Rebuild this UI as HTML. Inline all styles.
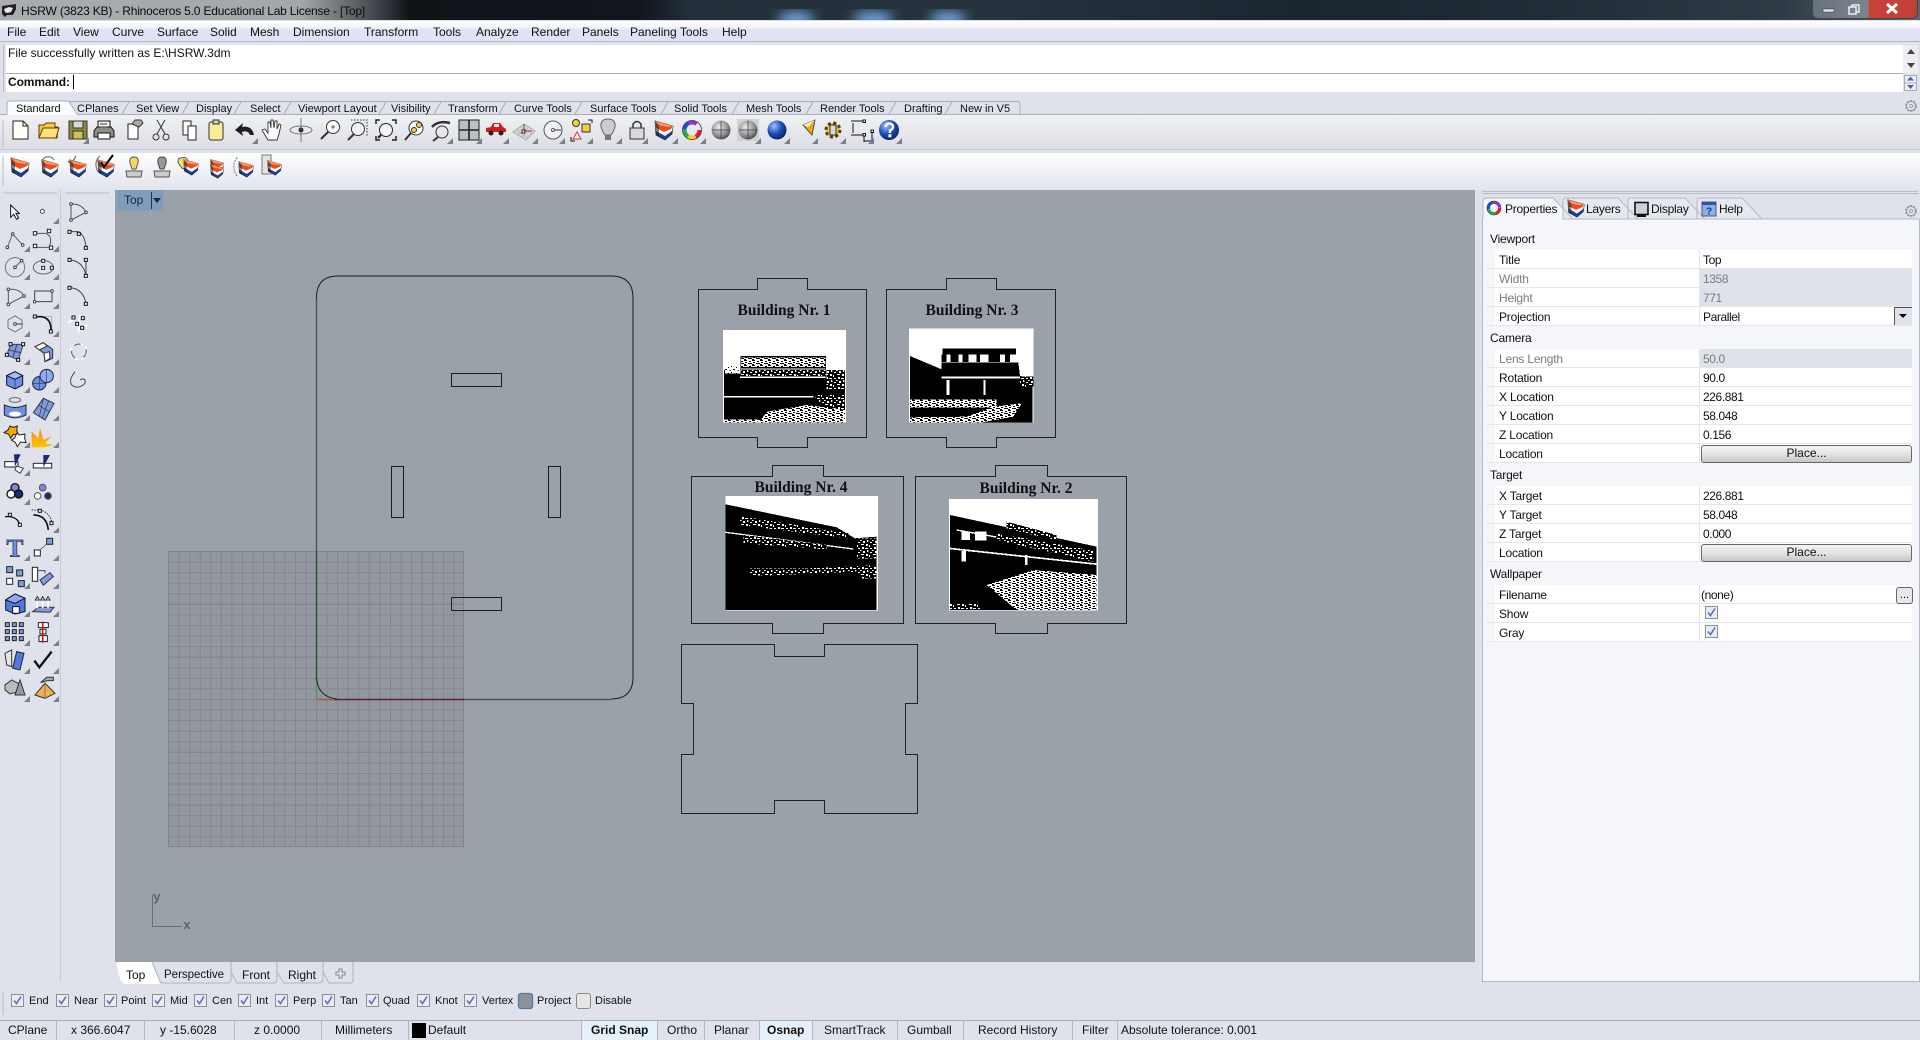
<!DOCTYPE html>
<html><head><meta charset="utf-8"><title>HSRW - Rhinoceros</title>
<style>
html,body{margin:0;padding:0;width:1920px;height:1040px;overflow:hidden;background:#dfe2ea}
body{position:relative;font:12px/14px "Liberation Sans",sans-serif;color:#111}
.b{position:absolute}
.t{position:absolute;white-space:nowrap;line-height:14px}
.f{font-size:11px}
.g{color:#7c7c7c}
.r{position:absolute;left:1487px;width:425px;height:18px;background:#fff;border-bottom:1px solid #e4e6ec}
.r:before{content:"";position:absolute;left:0;top:0;width:8px;height:18px;background:#f5f6fa}
.r:after{content:"";position:absolute;left:212px;top:0;width:1px;height:18px;background:#e4e6ec}
.r i{font-style:normal;position:absolute;left:12px;top:3px;white-space:nowrap;letter-spacing:-.2px}
.r u{text-decoration:none;position:absolute;left:216px;top:3px;white-space:nowrap;letter-spacing:-.4px}
.d{background:linear-gradient(90deg,#fff 213px,#dfe2ea 213px)}
.d i,.d u{color:#7c7c7c}
.s{position:absolute;left:1490px;white-space:nowrap;letter-spacing:-.2px}
.p{position:absolute;left:1701px;width:209px;height:16px;border:1px solid #666;border-radius:3px;background:linear-gradient(#f4f4f4,#e4e4e4 50%,#c6c6c6);text-align:center;line-height:15px}
.k{letter-spacing:-.25px}
</style></head><body>

<!-- title bar -->
<div class="b" style="left:0;top:0;width:1920px;height:21px;background:linear-gradient(90deg,#a9adb1 0,#a4a8ac 300px,#4a4f55 370px,#0e1318 410px,#10161c 640px,#232f3a 690px,#26333f 1000px,#1a2530 1300px,#1e2a35 1500px,#2e3a45 1780px,#5c666f 1920px)"></div>
<svg class="b" style="left:0;top:0" width="1920" height="21"><defs><filter id="bl"><feGaussianBlur stdDeviation="6"/></filter></defs><g filter="url(#bl)" fill="#6fa3d8"><ellipse cx="796" cy="20" rx="18" ry="9"/><ellipse cx="873" cy="20" rx="20" ry="9"/><ellipse cx="948" cy="20" rx="18" ry="9"/></g></svg>
<svg class="b" style="left:1px;top:3px" width="16" height="16"><path d="M1 3L8 2 15 1V6L12 12H6L4 14 1 11Z" fill="#222"/><path d="M3 6L8 4 12 5 10 9 6 10 4 9Z" fill="#e8e8e8"/></svg>
<div class="t" style="left:21px;top:4px;color:#0a0a0a;letter-spacing:-.19px">HSRW (3823 KB) - Rhinoceros 5.0 Educational Lab License - [Top]</div>
<div class="b" style="left:1813px;top:0;width:104px;height:18px;border-radius:0 0 5px 5px;background:linear-gradient(90deg,#68727c 0,#7a858f 55px,#c9423a 56px,#c04038 104px);box-shadow:0 0 0 1px #444"></div>
<svg class="b" style="left:1813px;top:0" width="104" height="18"><rect x="10" y="9" width="11" height="3" fill="#e8e8e8" stroke="#333" stroke-width=".5"/><rect x="39" y="5" width="7" height="7" fill="none" stroke="#eee" stroke-width="1.5"/><rect x="36" y="7" width="7" height="7" fill="#78828c" stroke="#eee" stroke-width="1.5"/><path d="M74 4L84 13M84 4L74 13" stroke="#fff" stroke-width="3"/></svg>
<div class="b" style="left:0;top:20px;width:1920px;height:1px;background:#dedede"></div>

<!-- menu -->
<div class="b" style="left:0;top:21px;width:1920px;height:20px;background:linear-gradient(#fff,#f3f5fb 6px,#dfe3f3 9px,#dfe3f3);border-bottom:1px solid #b4b8c4"></div>
<div class="t" style="left:7px;top:25px">File</div><div class="t" style="left:39px;top:25px">Edit</div><div class="t" style="left:73px;top:25px">View</div><div class="t" style="left:112px;top:25px">Curve</div><div class="t" style="left:157px;top:25px">Surface</div><div class="t" style="left:210px;top:25px">Solid</div><div class="t" style="left:250px;top:25px">Mesh</div><div class="t" style="left:293px;top:25px">Dimension</div><div class="t" style="left:364px;top:25px">Transform</div><div class="t" style="left:433px;top:25px">Tools</div><div class="t" style="left:476px;top:25px">Analyze</div><div class="t" style="left:531px;top:25px">Render</div><div class="t" style="left:582px;top:25px">Panels</div><div class="t" style="left:630px;top:25px">Paneling Tools</div><div class="t" style="left:722px;top:25px">Help</div>

<!-- command -->
<div class="b" style="left:6px;top:45px;width:1897px;height:28px;background:#fff;border-bottom:1px solid #a9adb6"></div>
<div class="b" style="left:6px;top:74px;width:1897px;height:18px;background:#fff"></div>
<div class="b" style="left:3px;top:45px;width:1px;height:48px;background:#b8bcc6"></div>
<div class="t" style="left:8px;top:46px">File successfully written as E:\HSRW.3dm</div>
<div class="t" style="left:8px;top:75px;font-weight:bold;letter-spacing:-.1px">Command:</div>
<div class="b" style="left:73px;top:75px;width:1px;height:14px;background:#000"></div>

<!-- toolbars bg -->
<div class="b" style="left:0;top:115px;width:1920px;height:34px;background:linear-gradient(#f0f1f5,#dcdee5)"></div>
<div class="b" style="left:0;top:149px;width:1920px;height:1px;background:#c4c7d0"></div>
<div class="b" style="left:0;top:153px;width:1920px;height:37px;background:linear-gradient(#fff,#f0f1f5 50%,#e2e4ec)"></div>

<!-- viewport -->
<div class="b" style="left:115px;top:190px;width:1360px;height:772px;background:#9ba1a9"></div>
<div class="b" style="left:118px;top:190px;width:45px;height:21px;background:#7f9cbd"></div>
<div class="b" style="left:115px;top:190px;width:3px;height:21px;background:#8ea0b4"></div>

<!-- right panel -->
<div class="b" style="left:1482px;top:219px;width:436px;height:762px;background:#f5f6fa;border:1px solid #b4b8c4;border-top:0"></div>

<svg class="b" style="left:0;top:0" width="1920" height="1040" font-family="Liberation Serif,serif">
<defs>
<pattern id="gr" patternUnits="userSpaceOnUse" x="168" y="551" width="10.57" height="10.57">
<rect width="10.57" height="10.57" fill="#969ba3"/>
<path d="M2.1 0V10.6M4.2 0V10.6M6.3 0V10.6M8.4 0V10.6M0 2.1H10.6M0 4.2H10.6M0 6.3H10.6M0 8.4H10.6" stroke="#90959d" stroke-width=".7"/>
<path d="M.5 0V10.6M0 .5H10.6" stroke="#81868e" stroke-width="1"/>
</pattern>
<pattern id="sp" patternUnits="userSpaceOnUse" width="36" height="30">
<rect width="36" height="30" fill="#000"/>
<g fill="#fff"><rect x="0" y="0" width="5" height="3"/><rect x="9" y="3" width="6" height="6"/><rect x="21" y="0" width="4" height="6"/><rect x="30" y="6" width="6" height="3"/><rect x="3" y="12" width="9" height="3"/><rect x="18" y="12" width="6" height="6"/><rect x="27" y="15" width="3" height="6"/><rect x="6" y="21" width="6" height="6"/><rect x="15" y="24" width="9" height="3"/><rect x="30" y="24" width="6" height="3"/></g>
</pattern>
<pattern id="spw" patternUnits="userSpaceOnUse" width="24" height="18">
<rect width="24" height="18" fill="#fff"/>
<g fill="#000"><rect x="0" y="3" width="3" height="3"/><rect x="9" y="0" width="3" height="3"/><rect x="15" y="9" width="6" height="3"/><rect x="5" y="12" width="3" height="3"/></g>
</pattern>
<pattern id="spm" patternUnits="userSpaceOnUse" width="24" height="15">
<rect width="24" height="15" fill="#fff"/>
<g fill="#000"><rect x="0" y="0" width="9" height="3"/><rect x="15" y="3" width="6" height="3"/><rect x="3" y="6" width="6" height="3"/><rect x="12" y="9" width="12" height="3"/><rect x="0" y="12" width="6" height="3"/></g>
</pattern>
<symbol id="lay" viewBox="-11 -11 22 22" overflow="visible">
<path d="M-9-9L9-4 8 4 1 10-8 5Z" fill="#1c3f92" stroke="#223" stroke-width=".7"/>
<path d="M-9-8L9-4 8 1 1 6-8 1Z" fill="#fff"/>
<path d="M-9-9L9-4 7-1 0 2-8-2Z" fill="#ea4e1e"/>
<path d="M-9-9L9-4 4-3-6-5Z" fill="#f89a60"/>
<path d="M-9-9L-8 5-5 7-5-5Z" fill="#222" opacity=".55"/>
</symbol>
<symbol id="cb" viewBox="0 0 13 13" overflow="visible"><rect x=".5" y=".5" width="12" height="12" fill="#e9ecf2" stroke="#8e8f8f"/><path d="M3 6.5L5.5 9.5 10 2.5" fill="none" stroke="#5a70b8" stroke-width="1.6"/></symbol>
<symbol id="gear" viewBox="-7 -7 14 14" overflow="visible"><circle r="5" fill="#dfe2ea" stroke="#9a9ea6" stroke-dasharray="2 1.2" stroke-width="2"/><circle r="4.6" fill="none" stroke="#8a8e96" stroke-width=".6"/><circle r="1.5" fill="none" stroke="#8a8e96" stroke-width=".8"/></symbol>
<path id="tri" d="M6 0V6H0Z" fill="#7c7f86"/>
<linearGradient id="org" x1="0" y1="0" x2="0" y2="1"><stop offset="0" stop-color="#f08a10"/><stop offset="1" stop-color="#ffc400"/></linearGradient>
<radialGradient id="blue" cx=".35" cy=".3" r=".8"><stop offset="0" stop-color="#9fc0ff"/><stop offset=".5" stop-color="#1c4fb8"/><stop offset="1" stop-color="#051a55"/></radialGradient>
<radialGradient id="gry" cx=".4" cy=".35" r=".8"><stop offset="0" stop-color="#eee"/><stop offset=".6" stop-color="#888"/><stop offset="1" stop-color="#222"/></radialGradient>
</defs>

<!-- grips -->
<path d="M3 120V147M3 156V186M3 992V1015M4 193H57M66 193H109M1482 193.500H1918M1482 191.500H1918" stroke="#b8bcc6" fill="none"/>
<path d="M60.500 190V982" stroke="#c8cbd4"/>

<!-- top tabs -->
<path d="M7 115V104Q7 101 10 101H66Q69 101 70 103L77 115Z" fill="#fafbfd"/>
<path d="M0 114.500H7M77 114.500H1920" stroke="#a8adb9"/>
<path d="M7 115V104Q7 101 10 101H66Q69 101 70 103L77 114M69 101.500H1017Q1020 101 1020 104V114M129 102L122 114M189 102L182 114M241 102L234 114M291 102L284 114M386 102L379 114M441 102L434 114M506 102L499 114M582 102L575 114M668 102L661 114M739 102L732 114M813 102L806 114M896 102L889 114M952 102L945 114" fill="none" stroke="#a8adb9"/>
<use href="#gear" x="1904" y="99" width="14" height="14"/>
<use href="#gear" x="1904" y="204" width="14" height="14"/>

<!-- command scrollers -->
<rect x="1903" y="45" width="15" height="28" fill="#eceef2"/>
<path d="M1911 49L1915 54H1907ZM1911 68L1907 63H1915Z" fill="#444"/>
<rect x="1904.500" y="75.500" width="12" height="15" fill="#eceef2" stroke="#a8adb9"/>
<path d="M1904 83H1917" stroke="#a8adb9"/>
<path d="M1910.500 76.500L1914 80.500H1907ZM1910.500 89L1907 85H1914Z" fill="#4a62b0"/>

<!-- Standard toolbar icons -->
<g stroke-width="1">
<g transform="translate(20,130)"><path d="M-7-9H3L8-4V9H-7Z" fill="#fffff8" stroke="#222"/><path d="M3-9V-4H8" fill="none" stroke="#222"/></g>
<g transform="translate(49,130)"><path d="M-10 8V-5H-5L-3-7H6V-3H9L8 8Z" fill="#f6c93e" stroke="#5c3f00"/><path d="M-10 8L-6-2H10L7 8Z" fill="#ffe37a" stroke="#5c3f00"/></g>
<g transform="translate(78,130)"><rect x="-9" y="-9" width="18" height="18" fill="#8d8a3a" stroke="#333"/><rect x="-5" y="-9" width="10" height="7" fill="#d8d8d8" stroke="#333"/><rect x="-5" y="1" width="10" height="8" fill="#cfc05a" stroke="#333"/></g>
<g transform="translate(104,130)"><rect x="-6" y="-9" width="12" height="9" fill="#eee" stroke="#111"/><path d="M-10 1L-7-3H7L10 1V7H-10Z" fill="#8c8c8c" stroke="#111"/><rect x="-6" y="3" width="12" height="6" fill="#fff" stroke="#111"/><path d="M-4-6H3M-4-3H3" stroke="#444"/></g>
<g transform="translate(135,130)"><path d="M-7-6H3V9H-7Z" fill="#fff" stroke="#222"/><path d="M-3-6L0-10H6L8-7 4-3Z" fill="#aaa" stroke="#333"/></g>
<g transform="translate(161,130)" fill="none" stroke="#333"><path d="M-4-10L4 4M4-10L-4 4"/><circle cx="-5" cy="7" r="3"/><circle cx="5" cy="7" r="3"/></g>
<g transform="translate(190,130)"><path d="M-7-9H1V5H-7Z" fill="#fff" stroke="#222"/><path d="M-2-4H6V10H-2Z" fill="#fff" stroke="#222"/></g>
<g transform="translate(216,130)"><rect x="-7" y="-8" width="14" height="18" rx="2" fill="#f7ee9a" stroke="#333"/><rect x="-3" y="-10" width="6" height="4" fill="#ccc" stroke="#333"/></g>
<g transform="translate(245,130)"><path d="M9 5Q7-5-3-3L-2-7-10 0-2 6-3 2Q3 0 5 5Z" fill="#1f1f1f"/></g>
<g transform="translate(271,130)"><path d="M-9 0L-6-1-3 3V-8L-1-8 0-2V-10H2L3-2 4-9H6L6-1 8-6 10-5 8 4 6 10H-3Z" fill="#fff" stroke="#333" stroke-width=".9"/></g>
<g transform="translate(301,130)" fill="none" stroke="#777"><ellipse rx="11" ry="4"/><path d="M0-12V12"/><circle r="2.500" fill="#333" stroke="none"/></g>
<g transform="translate(330,130)" fill="none" stroke="#333"><circle cx="3" cy="-3" r="6.500" fill="#fff"/><path d="M-2 2L-9 9" stroke-width="2"/><path d="M1-3H5M3-5V-1" stroke-width=".8"/></g>
<g transform="translate(357,130)" fill="none" stroke="#333"><circle cx="1" cy="-1" r="6.500" fill="#f2f3f6"/><path d="M-3 4L-9 10" stroke-width="2"/><path d="M-6-10H10V6" stroke-dasharray="1.500 1.500"/></g>
<g transform="translate(386,130)" fill="none" stroke="#222"><circle cx="0" cy="0" r="6.500" fill="#f2f3f6"/><path d="M-5 5L-8 8" stroke-width="2"/><path d="M-10-6V-10H-6M6-10H10V-6M-10 6V10H-6M10 6V10H6" stroke-width="1.500"/></g>
<g transform="translate(414,130)" fill="none" stroke="#333"><circle cx="2" cy="-2" r="7" fill="#fff"/><path d="M-3 3L-9 10" stroke-width="2"/><circle cx="0" cy="0" r="2.500" fill="#f5d03c"/><circle cx="5" cy="-5" r="2.500" fill="#f5d03c"/></g>
<g transform="translate(441,130)" fill="none" stroke="#333"><circle cx="1" cy="2" r="6"/><path d="M-3 7L-8 11" stroke-width="2"/><path d="M-9-3Q-3-10 9-7" stroke-width="2.500"/></g>
<g transform="translate(469,130)"><rect x="-10" y="-10" width="20" height="20" fill="#bcbfc5" stroke="#222"/><path d="M0-10V10M-10 0H10" stroke="#222" stroke-width="1.600"/></g>
<g transform="translate(496,130)"><path d="M-10 2V-2L-5-3-3-7H4L7-3 10-1V2Z" fill="#d21c1c"/><circle cx="-5" cy="3" r="2.500" fill="#222"/><circle cx="5" cy="3" r="2.500" fill="#222"/><rect x="-2" y="-6" width="5" height="3" fill="#eee"/></g>
<g transform="translate(524,130)"><path d="M-11 2L0-6 11 1 2 10Z" fill="#d4d6db" stroke="#aaa"/><path d="M-7 0L4 8M-3-3L8 4M5-3L-6 5M0-5L-1 8" stroke="#bbb"/><rect x="-2" y="0" width="3" height="3" fill="#fff" stroke="#222"/><path d="M0 0V-6" stroke="#2a8a2a"/><path d="M0 1H8" stroke="#c22"/></g>
<g transform="translate(553,130)" fill="none" stroke="#555"><circle r="9" fill="#f0f1f4"/><circle r="1.500" fill="#fff"/><path d="M2 0H8" stroke-width="1.200"/></g>
<g transform="translate(582,130)"><circle cx="-6" cy="-7" r="3.500" fill="#f5d03c" stroke="#333"/><rect x="0" y="-6" width="8" height="8" fill="#f5d03c" stroke="#333"/><path d="M-5 2L-1 9H-9Z" fill="#fff" stroke="#c33"/><path d="M6-10H10V-7M-11 7V11H-7" stroke="#111" fill="none"/></g>
<g transform="translate(608,130)"><path d="M0-11Q8-11 7-3 6 1 3 5H-3Q-6 1-7-3-8-11 0-11Z" fill="#ccc" stroke="#666"/><rect x="-3" y="5" width="6" height="5" fill="#777"/></g>
<g transform="translate(637,130)"><rect x="-7" y="-2" width="14" height="11" fill="#d8d8d8" stroke="#333"/><path d="M-4-2V-6Q0-11 4-6V-2" fill="none" stroke="#333" stroke-width="1.500"/></g>
<use href="#lay" x="653" y="119" width="22" height="22"/>
<g transform="translate(692,130)"><circle r="7.500" fill="none" stroke="#e02030" stroke-width="4" stroke-dasharray="8 40"/><circle r="7.500" fill="none" stroke="#f5d020" stroke-width="4" stroke-dasharray="8 40" stroke-dashoffset="-8"/><circle r="7.500" fill="none" stroke="#20b040" stroke-width="4" stroke-dasharray="8 40" stroke-dashoffset="-16"/><circle r="7.500" fill="none" stroke="#2050d0" stroke-width="4" stroke-dasharray="8 40" stroke-dashoffset="-24"/><circle r="7.500" fill="none" stroke="#a030c0" stroke-width="4" stroke-dasharray="8 40" stroke-dashoffset="-32"/><circle r="9.500" fill="none" stroke="#333" stroke-width=".7"/></g>
<g transform="translate(721,130)"><circle r="9.500" fill="url(#gry)"/><path d="M0-9V9M-9 0H9" stroke="#444" stroke-width=".8"/></g>
<g transform="translate(748,130)"><rect x="-11" y="-11" width="22" height="22" fill="#cfd1d6"/><circle r="9.500" fill="url(#gry)"/><path d="M0-9V9M-9 0H9" stroke="#444" stroke-width=".8"/></g>
<g transform="translate(777,130)"><circle r="9.500" fill="url(#blue)"/></g>
<g transform="translate(809,130)"><path d="M-6-5L6-10 3 5Z" fill="#f5a020" stroke="#333" stroke-width=".8"/><path d="M-6-5L6-10-1-3Z" fill="#fff2c8"/></g>
<g transform="translate(833,130)"><circle r="7" fill="#e8c050" stroke="#5c3f00" stroke-width="3" stroke-dasharray="3 2.500"/><rect x="-3" y="-5" width="6" height="10" fill="#d8d8d8" stroke="#333"/></g>
<g transform="translate(860,130)" fill="none" stroke="#111"><path d="M-9-9H4M-7-7V3M-9 5H4M4 5V12M12 1V12M4 11H12"/><rect x="3" y="-10" width="2.500" height="2.500" fill="#fff"/><rect x="3" y="3.500" width="2.500" height="2.500" fill="#fff"/><rect x="11" y="0" width="2.500" height="2.500" fill="#fff"/></g>
<g transform="translate(889,130)"><circle r="10" fill="url(#blue)"/><path d="M-3.500-3Q-3-6.500 0-6.500 4-6.500 4-3 4-1 1 .5V3" fill="none" stroke="#fff" stroke-width="2.400"/><rect x="-.6" y="4.300" width="3" height="3" fill="#fff"/></g>
<use href="#tri" x="83" y="138"/><use href="#tri" x="252" y="138"/><use href="#tri" x="447" y="138"/><use href="#tri" x="476" y="138"/><use href="#tri" x="503" y="138"/><use href="#tri" x="532" y="138"/><use href="#tri" x="559" y="138"/><use href="#tri" x="587" y="138"/><use href="#tri" x="616" y="138"/><use href="#tri" x="642" y="138"/><use href="#tri" x="672" y="138"/><use href="#tri" x="700" y="138"/><use href="#tri" x="755" y="138"/><use href="#tri" x="784" y="138"/><use href="#tri" x="812" y="138"/><use href="#tri" x="840" y="138"/><use href="#tri" x="868" y="138"/><use href="#tri" x="896" y="138"/>
</g>

<!-- second toolbar -->
<use href="#lay" x="9" y="156" width="22" height="22"/>
<g fill="none" stroke="#666"><path d="M45 170Q39 160 46 157Q52 156 54 160"/></g><use href="#lay" x="40" y="158" width="20" height="20"/>
<path d="M68 161L71 164 76 156" fill="none" stroke="#555"/><use href="#lay" x="68" y="158" width="20" height="20"/>
<use href="#lay" x="96" y="158" width="20" height="20"/><path d="M101 162L104 167 113 155" fill="none" stroke="#000" stroke-width="2"/><path d="M98 172Q93 162 100 156" fill="none" stroke="#666"/>
<g transform="translate(134,167)"><path d="M0-10Q5-10 4-4 3-1 2 2H-2Q-3-1-4-4-5-10 0-10Z" fill="#f3d860" stroke="#555"/><path d="M-8 4H8L7 10H-7Z" fill="#ccc" stroke="#555"/><path d="M-2 2H2V5H-2Z" fill="#999"/></g>
<g transform="translate(162,167)"><path d="M0-10Q5-10 4-4 3-1 2 2H-2Q-3-1-4-4-5-10 0-10Z" fill="#999" stroke="#444"/><path d="M-8 4H8L7 10H-7Z" fill="#ccc" stroke="#555"/></g>
<path d="M182 158Q187 156 188 162 186 167 183 169 179 165 178 162 178 157 182 158Z" fill="#f5e070" stroke="#555"/><use href="#lay" x="182" y="158" width="18" height="18"/>
<use href="#lay" x="208" y="158" width="18" height="16"/><use href="#lay" x="208" y="163" width="18" height="16" />
<use href="#lay" x="237" y="160" width="18" height="18"/><path d="M237 176Q230 165 238 157" fill="none" stroke="#777" stroke-dasharray="2 1"/>
<rect x="262" y="155" width="9" height="19" fill="#e4e4e4" stroke="#777"/><use href="#lay" x="266" y="159" width="17" height="17"/>

<!-- left toolbar -->
<g transform="translate(0,190) scale(.3333)" stroke-width="3" fill="none" stroke="#444">
<path d="M32 45V82L41 73 50 88 56 84 48 70H58Z" fill="#fff" stroke="#111"/>
<circle cx="127" cy="64" r="6" fill="#fff"/>
<path d="M22 172L38 132 68 165" stroke="#666"/><g fill="#fff"><circle cx="22" cy="172" r="4"/><circle cx="38" cy="132" r="4"/><circle cx="68" cy="165" r="4"/></g>
<path d="M105 130H135Q160 135 148 172H105" stroke="#555"/><g fill="#fff" stroke="#222"><rect x="100" y="125" width="10" height="10"/><rect x="142" y="118" width="10" height="10"/><rect x="100" y="163" width="10" height="10"/><rect x="148" y="168" width="10" height="10"/></g>
<circle cx="45" cy="232" r="29" stroke="#777"/><path d="M45 232L65 212" stroke="#555"/><circle cx="45" cy="232" r="4" fill="#fff"/><circle cx="65" cy="212" r="4" fill="#fff"/>
<ellipse cx="130" cy="232" rx="30" ry="20" stroke="#666"/><g fill="#fff" stroke="#222"><rect x="125" y="208" width="9" height="9"/><rect x="125" y="229" width="9" height="9"/><rect x="151" y="229" width="9" height="9"/></g>
<path d="M25 298Q60 295 72 318L25 343Z" stroke="#555"/><g fill="#fff"><circle cx="25" cy="298" r="4"/><circle cx="72" cy="318" r="4"/><circle cx="25" cy="343" r="4"/></g>
<rect x="104" y="303" width="52" height="32" stroke="#444"/><g fill="#fff"><circle cx="104" cy="335" r="4"/><circle cx="156" cy="303" r="4"/></g>
<path d="M45 378L66 390V414L45 426 24 414V390Z" stroke="#777"/><path d="M45 402H68" stroke="#444"/><circle cx="45" cy="402" r="4" fill="#fff"/>
<path d="M130 380H155V420" stroke="#b0b3ba"/><path d="M105 380H125Q155 385 153 425" stroke="#111" stroke-width="5"/><g fill="#fff" stroke="#111"><rect x="100" y="375" width="9" height="9"/><rect x="148" y="420" width="9" height="9"/></g>
<path d="M32 463H70L55 510 20 495Z" fill="#7e9bdc" stroke="#445"/><path d="M51 463L38 503M26 480L62 488" stroke="#445"/><g fill="#fff" stroke="#111"><rect x="27" y="458" width="9" height="9"/><rect x="65" y="458" width="9" height="9"/><rect x="50" y="505" width="9" height="9"/><rect x="16" y="490" width="9" height="9"/></g>
<path d="M105 470L130 458 158 478 158 505 135 515 132 490Z" fill="#7e9bdc" stroke="#333"/><path d="M105 470L130 458 142 468 118 480Z" fill="#fff" stroke="#333"/><path d="M132 490L135 515 150 505 148 485Z" fill="#fff" stroke="#333"/>
<path d="M20 557L45 545 68 557V585L45 597 20 585Z" fill="#6e8fe8" stroke="#112"/><path d="M20 557L45 568 68 557M45 568V597" stroke="#112" stroke-width="1.500"/><path d="M20 557L45 545 68 557 45 568Z" fill="#a6bcf4" stroke="#112"/>
<circle cx="118" cy="580" r="20" fill="#6e8fe8" stroke="#223"/><circle cx="140" cy="558" r="20" fill="#8eaaf2" stroke="#223"/><path d="M118 560V600M98 580H138M140 538V578" stroke="#223" stroke-width="1.500"/>
<ellipse cx="45" cy="630" rx="17" ry="7" stroke="#666"/><path d="M13 645Q45 660 78 645V675Q45 692 13 675Z" fill="#6e8fe8" stroke="#223"/><ellipse cx="45" cy="672" rx="20" ry="9" fill="#fff" stroke="#6e8fe8" stroke-width="3"/>
<path d="M100 668L130 625 162 640 135 690Z" fill="#7e9bdc" stroke="#334"/><path d="M115 646L148 665M130 625L118 680M146 632L126 686" stroke="#334" stroke-width="2"/>
<path d="M30 708L40 712 52 708 50 722 56 735 40 733 32 745 26 733 12 728 24 720Z" fill="#f5a800" stroke="#222"/><path d="M50 730L60 735 75 732 74 745 78 758 62 756 52 770 46 757 34 750 44 744Z" fill="#fff" stroke="#222"/>
<path d="M95 772V725L115 745 120 713 130 750 155 738 135 760 160 765 135 772Z" fill="url(#org)" stroke="none"/>
<rect x="14" y="815" width="40" height="16" fill="#fff" stroke="#222"/><path d="M42 793H62L45 830Z" fill="#1c2a70" stroke="none"/><path d="M50 828L70 835 60 850 45 840Z" fill="#fff" stroke="#444"/>
<rect x="100" y="820" width="55" height="14" fill="#fff" stroke="#222"/><path d="M130 795H150L130 832Z" fill="#1c2a70" stroke="none"/>
<circle cx="45" cy="893" r="12" fill="#8a80e0" stroke="#111" stroke-width="4"/><circle cx="33" cy="912" r="12" fill="#fff" stroke="#111" stroke-width="4"/><circle cx="56" cy="912" r="12" fill="#1c2a70" stroke="#111" stroke-width="4"/>
<circle cx="128" cy="893" r="10" fill="#8a80e0" stroke="#555"/><circle cx="113" cy="918" r="10" fill="#fff" stroke="#555"/><circle cx="144" cy="918" r="10" fill="#1c2a70" stroke="#555"/>
<path d="M15 980H30Q58 985 60 1010" stroke="#111" stroke-width="4"/><g fill="#fff" stroke="#111"><rect x="25" y="970" width="9" height="9"/><rect x="55" y="1000" width="9" height="9"/></g>
<path d="M100 975Q140 975 145 1020" stroke="#111" stroke-width="5"/><path d="M95 960H118Q150 965 158 1005" stroke="#222" stroke-dasharray="4 4"/><g fill="#fff" stroke="#111"><rect x="115" y="958" width="9" height="9"/><rect x="150" y="995" width="9" height="9"/></g>
<text x="45" y="1100" font-size="76" font-weight="bold" text-anchor="middle" fill="#6e8fe8" stroke="#223" stroke-width="2">T</text>
<rect x="103" y="1080" width="18" height="18" fill="#fff" stroke="#222"/><rect x="140" y="1045" width="18" height="18" fill="#7e9bdc" stroke="#222"/><path d="M122 1078L140 1062" stroke="#444" stroke-width="2"/>
<rect x="20" y="1130" width="18" height="18" fill="#7e9bdc" stroke="#222"/><rect x="50" y="1140" width="18" height="18" fill="#7e9bdc" stroke="#222"/><rect x="20" y="1165" width="18" height="18" fill="#fff" stroke="#222"/><rect x="55" y="1172" width="18" height="18" fill="#7e9bdc" stroke="#222"/>
<rect x="97" y="1132" width="16" height="42" fill="#fff" stroke="#222"/><path d="M120 1170L150 1148 160 1160 130 1186Z" fill="#7e9bdc" stroke="#334"/><path d="M115 1142H135V1150" stroke="#444"/>
<path d="M17 1230L45 1212 75 1225V1265L45 1272 17 1260Z" fill="#5577dd" stroke="#112"/><path d="M17 1230L45 1212 75 1225 45 1240Z" fill="#8fa8ee" stroke="#112"/><rect x="38" y="1250" width="20" height="20" fill="#fff" stroke="#112"/>
<path d="M98 1265L115 1252H162L150 1267Z" fill="#7e9bdc" stroke="#334"/><path d="M112 1255V1225M128 1255V1225M144 1255V1225" stroke="#fff" stroke-width="5"/><path d="M106 1230L112 1220 118 1230ZM122 1230L128 1220 134 1230ZM138 1230L144 1220 150 1230Z" fill="#fff" stroke="#333"/>
<g fill="#7e9bdc" stroke="#222"><rect x="16" y="1298" width="12" height="12"/><rect x="37" y="1298" width="12" height="12"/><rect x="58" y="1298" width="12" height="12"/><rect x="16" y="1319" width="12" height="12"/><rect x="37" y="1319" width="12" height="12"/><rect x="58" y="1319" width="12" height="12"/><rect x="16" y="1340" width="12" height="12"/><rect x="37" y="1340" width="12" height="12"/><rect x="58" y="1340" width="12" height="12"/></g>
<g fill="#fff" stroke="#222"><rect x="115" y="1298" width="30" height="15"/><rect x="120" y="1318" width="18" height="14"/><rect x="117" y="1337" width="25" height="18"/></g><path d="M128 1295V1358" stroke="#c01818" stroke-width="5"/>
<path d="M15 1390L35 1380V1430L20 1425Z" fill="#e6e6e6" stroke="#333"/><path d="M50 1385L72 1390 60 1440 38 1435Z" fill="#5577dd" stroke="#223"/>
<path d="M103 1412L118 1432 155 1385" stroke="#111" stroke-width="7"/>
<path d="M15 1485L35 1470 55 1480V1505L30 1512 15 1500Z" fill="#bbb" stroke="#333"/><path d="M60 1470L45 1515H75Z" fill="#999" stroke="#333"/>
<path d="M105 1515L135 1480 165 1510 135 1525Z" fill="#f0b050" stroke="#333"/><path d="M135 1480L135 1525" stroke="#a66"/><path d="M122 1478L140 1462H160V1472H142Z" fill="#aaa" stroke="#333"/>
<path d="M213 42Q245 40 258 67L213 90Z" stroke="#555"/><g fill="#fff"><circle cx="213" cy="42" r="4"/><circle cx="258" cy="67" r="4"/><circle cx="213" cy="90" r="4"/></g>
<path d="M208 125H235Q255 135 258 172" stroke="#444"/><g fill="#fff" stroke="#111"><rect x="204" y="121" width="9" height="9"/><rect x="232" y="127" width="9" height="9"/><rect x="253" y="169" width="9" height="9"/></g>
<path d="M208 210Q250 212 258 258V210" stroke="#444"/><g fill="#fff" stroke="#111"><rect x="204" y="205" width="9" height="9"/><rect x="253" y="205" width="9" height="9"/><rect x="253" y="253" width="9" height="9"/></g>
<path d="M208 293Q250 295 258 342" stroke="#444"/><g fill="#fff" stroke="#111"><rect x="204" y="289" width="9" height="9"/><rect x="253" y="337" width="9" height="9"/></g>
<path d="M205 398L225 385M240 375L236 428M252 408L262 405" stroke="#fff" stroke-width="5"/><g fill="#fff" stroke="#111"><rect x="216" y="378" width="9" height="9"/><rect x="244" y="380" width="9" height="9"/><rect x="227" y="397" width="9" height="9"/><rect x="242" y="409" width="9" height="9"/></g>
<circle cx="236" cy="485" r="24" stroke="#fff" stroke-width="5" stroke-dasharray="12 7"/><path d="M222 467Q232 460 242 463M258 478Q262 492 250 502M225 504Q213 495 215 482" stroke="#555" stroke-width="3"/>
<path d="M225 545Q205 570 215 585 235 600 255 580 258 560 240 570" stroke="#444" stroke-width="3"/>
</g>
<g>
<use href="#tri" x="53" y="218"/><use href="#tri" x="24" y="246"/><use href="#tri" x="53" y="246"/><use href="#tri" x="24" y="274"/><use href="#tri" x="53" y="274"/><use href="#tri" x="24" y="303"/><use href="#tri" x="53" y="303"/><use href="#tri" x="24" y="331"/><use href="#tri" x="53" y="331"/><use href="#tri" x="24" y="359"/><use href="#tri" x="53" y="359"/><use href="#tri" x="24" y="387"/><use href="#tri" x="53" y="387"/><use href="#tri" x="24" y="415"/><use href="#tri" x="53" y="415"/><use href="#tri" x="24" y="442"/><use href="#tri" x="53" y="442"/><use href="#tri" x="24" y="470"/><use href="#tri" x="24" y="499"/><use href="#tri" x="53" y="527"/><use href="#tri" x="24" y="555"/><use href="#tri" x="53" y="555"/><use href="#tri" x="24" y="583"/><use href="#tri" x="53" y="583"/><use href="#tri" x="24" y="611"/><use href="#tri" x="53" y="611"/><use href="#tri" x="24" y="640"/><use href="#tri" x="53" y="640"/><use href="#tri" x="24" y="668"/><use href="#tri" x="53" y="668"/><use href="#tri" x="24" y="696"/><use href="#tri" x="53" y="696"/>
</g>

<!-- viewport dropdown -->
<path d="M151.500 192V209" stroke="#26364a"/><path d="M153 198H161L157 203Z" fill="#1a2a3a"/>

<!-- model grid -->
<rect x="168" y="551" width="296" height="296" fill="url(#gr)"/>
<rect x="168.500" y="551.500" width="295" height="295" fill="none" stroke="#7f848c"/>
<path d="M221 551V847M274 551V847M369 551V847M422 551V847M168 604H464M168 657H464M168 752H464M168 805H464" stroke="#7b8088" stroke-width=".8" opacity=".5"/>

<!-- axes and large rect -->
<path d="M316.500 298V551" stroke="#4e5258" stroke-width="1.400"/>
<path d="M464 699.500H611" stroke="#4e5258" stroke-width="1.400"/>
<path d="M316.500 551V679" stroke="#23502a" stroke-width="1.400"/>
<path d="M316.500 680V699" stroke="#4a9a4a" stroke-width="1.400"/>
<path d="M317 699.500H335" stroke="#a55555" stroke-width="1.400"/>
<path d="M335 699.500H464" stroke="#58262c" stroke-width="1.400"/>
<path d="M316.500 678Q318 697 337 699M316.500 298Q316.500 276 338 276H611Q633 276 633 298V677Q633 699 611 699" fill="none" stroke="#1a1d22"/>
<g fill="none" stroke="#1a1d22"><rect x="451.500" y="373.500" width="50" height="13"/><rect x="451.500" y="597.500" width="50" height="13"/><rect x="391.500" y="466.500" width="12" height="51"/><rect x="548.500" y="466.500" width="12" height="51"/></g>

<!-- panels -->
<g fill="none" stroke="#1e2126">
<path d="M698.500 289.500H757.500V278.500H807.500V289.500H866.500V437.500H807.500V447.500H757.500V437.500H698.500Z"/>
<path d="M886.500 289.500H946.500V278.500H996.500V289.500H1055.500V437.500H996.500V447.500H946.500V437.500H886.500Z"/>
<path d="M691.500 476.500H772.500V465.500H823.500V476.500H903.500V623.500H823.500V633.500H772.500V623.500H691.500Z"/>
<path d="M915.500 476.500H995.500V465.500H1047.500V476.500H1126.500V623.500H1047.500V633.500H995.500V623.500H915.500Z"/>
<path d="M681.500 644.500H774.500V656.500H824.500V644.500H917.500V703.500H905.500V754.500H917.500V813.500H824.500V800.500H774.500V813.500H681.500V754.500H693.500V703.500H681.500Z"/>
</g>
<g font-family="Liberation Serif,serif" font-size="15.500" font-weight="bold" text-anchor="middle" fill="#111">
<text x="784" y="315">Building Nr. 1</text>
<text x="972" y="315">Building Nr. 3</text>
<text x="801" y="492">Building Nr. 4</text>
<text x="1026" y="493">Building Nr. 2</text>
</g>
<g transform="translate(680,270) scale(.33333)" shape-rendering="crispEdges">
<!-- image 1 -->
<rect x="129" y="180" width="369" height="278" fill="#fff"/>
<path d="M132 300L182 312V258H438V322L495 300V450H132Z" fill="#000"/>
<rect x="183" y="263" width="253" height="28" fill="url(#spm)"/>
<rect x="183" y="296" width="253" height="22" fill="url(#sp)"/>
<path d="M183 295H436V299H183ZM180 320H436V324H180ZM132 378H400V383H132Z" fill="#fff"/>
<rect x="440" y="300" width="55" height="60" fill="url(#sp)"/>
<rect x="135" y="285" width="40" height="25" fill="url(#spw)"/>
<path d="M235 458L262 425 380 405 495 420V458Z" fill="url(#spm)"/>
<path d="M400 375L495 375V420L430 410Z" fill="url(#sp)"/>
<rect x="132" y="448" width="100" height="10" fill="url(#spm)"/>
<!-- image 3 -->
<rect x="687" y="176" width="374" height="282" fill="#fff"/>
<path d="M690 258L785 298V278H1015L1020 318 1058 325V458H690Z" fill="#000"/>
<rect x="788" y="236" width="220" height="20" fill="#000"/>
<rect x="785" y="254" width="225" height="24" fill="#fff"/>
<path d="M785 254H800V276H785ZM812 254H835V276H812ZM847 254H865V276H847ZM890 254H900V276H890ZM925 254H960V276H925ZM975 254H990V276H975Z" fill="#000"/>
<rect x="785" y="320" width="235" height="5" fill="#fff"/>
<path d="M800 330H808V375H800ZM910 330H916V375H910Z" fill="#fff"/>
<rect x="690" y="388" width="260" height="24" fill="url(#spm)"/>
<rect x="1020" y="320" width="40" height="30" fill="url(#sp)"/>
<path d="M940 410L1025 400 1000 440 900 458H690V442L860 440Z" fill="url(#spm)"/>
<!-- image 4 -->
<rect x="136" y="678" width="458" height="344" fill="#fff"/>
<path d="M137 703L470 772 525 805 590 800V1020H137Z" fill="#000"/>
<path d="M180 738L505 790V805L180 765Z" fill="url(#sp)"/>
<path d="M137 785L520 835V839L137 789Z" fill="#fff"/>
<path d="M190 795L440 825V838L190 820Z" fill="url(#sp)"/>
<rect x="530" y="805" width="60" height="60" fill="url(#sp)"/>
<path d="M210 895L390 895 590 885V925H540L530 905 380 912 210 918Z" fill="url(#sp)"/>
<!-- image 2 -->
<rect x="807" y="687" width="447" height="335" fill="#fff"/>
<path d="M810 735L1250 830V1020H810Z" fill="#000"/>
<path d="M980 755L1130 795V810L1060 795 980 775Z" fill="url(#sp)"/>
<path d="M830 778L1240 850V855L830 782Z" fill="#fff"/>
<path d="M810 833L1250 880V885L810 838Z" fill="#fff"/>
<path d="M845 785H870V810H845ZM885 785H920V812H885ZM845 843H858V875H845ZM1035 855H1042V885H1035Z" fill="#fff"/>
<path d="M950 790L1240 842V875L950 810Z" fill="url(#sp)"/>
<path d="M920 945L1060 900 1250 915V1020H1010Z" fill="url(#spm)"/>
<path d="M810 1000H900V1020H810Z" fill="url(#sp)"/>
</g>

<!-- cplane icon -->
<path d="M152.500 895V926.500H182" fill="none" stroke="#6b6f75"/>
<text x="153" y="901" font-family="Liberation Mono,monospace" font-size="13" font-weight="bold" fill="#5e6268">y</text>
<text x="183" y="929" font-family="Liberation Mono,monospace" font-size="13" font-weight="bold" fill="#5e6268">x</text>

<!-- viewport tabs -->
<path d="M116 962H152L160 982Q160 984 157 984H127Q122 984 120 979Z" fill="#fff"/>
<path d="M152 962L160 981Q160 983 163 983H228Q231 983 231 980V962M231 972L237 983H273Q277 983 277 979V962M277 972L284 983H319Q323 983 323 979V962M323 972L329 983H350Q353 983 353 980V962" fill="none" stroke="#b0b4c0"/>
<path d="M339 969H342V972H345V975H342V978H339V975H336V972H339Z" fill="none" stroke="#888"/>

<!-- osnap checkboxes -->
<use href="#cb" x="11" y="994" width="13" height="13"/><use href="#cb" x="56" y="994" width="13" height="13"/><use href="#cb" x="104" y="994" width="13" height="13"/><use href="#cb" x="152" y="994" width="13" height="13"/><use href="#cb" x="194" y="994" width="13" height="13"/><use href="#cb" x="238" y="994" width="13" height="13"/><use href="#cb" x="275" y="994" width="13" height="13"/><use href="#cb" x="322" y="994" width="13" height="13"/><use href="#cb" x="366" y="994" width="13" height="13"/><use href="#cb" x="417" y="994" width="13" height="13"/><use href="#cb" x="464" y="994" width="13" height="13"/>
<rect x="518.500" y="993.500" width="14" height="15" rx="2.500" fill="#8e9298" stroke="#4b7ba8" stroke-width="1.300"/>
<rect x="576.500" y="993.500" width="14" height="15" rx="2.500" fill="#e6e6e6" stroke="#8a8a8a"/>

<!-- status bar -->
<path d="M0 1020.500H1920" stroke="#a9aeb9"/>
<rect x="582" y="1021" width="75" height="19" fill="#e4f0fa"/><rect x="759" y="1021" width="53" height="19" fill="#e4f0fa"/>
<path d="M56.500 1021V1040M144.500 1021V1040M234.500 1021V1040M321.500 1021V1040M408.500 1021V1040M581.500 1021V1040M657.500 1021V1040M704.500 1021V1040M759.500 1021V1040M812.500 1021V1040M897.500 1021V1040M963.500 1021V1040M1072.500 1021V1040M1117.500 1021V1040" stroke="#b4b8c4"/>
<rect x="412" y="1023" width="14" height="15" fill="#000"/>

<!-- right tabs -->
<path d="M1483 219V202Q1483 198 1487 198H1553L1573 219Z" fill="#f5f6fa"/>
<path d="M1563 219V201Q1563 198 1567 198H1618L1638 219ZM1628 219V201Q1628 198 1632 198H1685L1705 219ZM1697 219V201Q1697 198 1701 198H1742L1762 219Z" fill="#e6e8ef" stroke="#b4b8c4"/>
<path d="M1483 219V202Q1483 198 1487 198H1553L1573 219H1919" fill="none" stroke="#b4b8c4"/>
<rect x="1483.500" y="219" width="70" height="2" fill="#f5f6fa"/>
<circle cx="1494" cy="208" r="5.500" fill="#fff" stroke="#e02030" stroke-width="3" stroke-dasharray="7 30"/>
<circle cx="1494" cy="208" r="5.500" fill="none" stroke="#20b040" stroke-width="3" stroke-dasharray="9 30" stroke-dashoffset="-7"/>
<circle cx="1494" cy="208" r="5.500" fill="none" stroke="#2050d0" stroke-width="3" stroke-dasharray="9 30" stroke-dashoffset="-16"/>
<circle cx="1494" cy="208" r="5.500" fill="none" stroke="#a030c0" stroke-width="3" stroke-dasharray="9 30" stroke-dashoffset="-25"/>
<circle cx="1494" cy="208" r="7" fill="none" stroke="#333" stroke-width=".6"/>
<use href="#lay" x="1566" y="198" width="20" height="20"/>
<rect x="1635" y="202.500" width="13" height="12" fill="#cfd2d8" stroke="#111" stroke-width="1.600"/><path d="M1637 216H1646" stroke="#111" stroke-width="2"/>
<rect x="1702" y="202" width="14" height="14" fill="#8ab0e8" stroke="#556"/><rect x="1702" y="202" width="14" height="3" fill="#2b55a8"/><text x="1709" y="214.500" text-anchor="middle" font-family="Liberation Sans,sans-serif" font-size="10" font-weight="bold" fill="#1a3a9a">?</text>
</svg>

<!-- viewport / tabs text -->
<div class="t" style="left:124px;top:193px;color:#1a2a3a">Top</div>
<div class="t f" style="left:16px;top:102px">Standard</div><div class="t f" style="left:77px;top:102px">CPlanes</div><div class="t f" style="left:136px;top:102px">Set View</div><div class="t f" style="left:196px;top:102px">Display</div><div class="t f" style="left:250px;top:102px">Select</div><div class="t f" style="left:298px;top:102px">Viewport Layout</div><div class="t f" style="left:391px;top:102px">Visibility</div><div class="t f" style="left:448px;top:102px">Transform</div><div class="t f" style="left:514px;top:102px">Curve Tools</div><div class="t f" style="left:590px;top:102px">Surface Tools</div><div class="t f" style="left:674px;top:102px">Solid Tools</div><div class="t f" style="left:746px;top:102px">Mesh Tools</div><div class="t f" style="left:820px;top:102px">Render Tools</div><div class="t f" style="left:904px;top:102px">Drafting</div><div class="t f" style="left:960px;top:102px">New in V5</div>

<div class="t" style="left:126px;top:968px">Top</div><div class="t" style="left:164px;top:968px;font-size:11.5px">Perspective</div><div class="t" style="left:242px;top:968px">Front</div><div class="t" style="left:288px;top:968px">Right</div>

<!-- osnap labels -->
<div class="t f" style="left:29px;top:994px">End</div><div class="t f" style="left:74px;top:994px">Near</div><div class="t f" style="left:121px;top:994px">Point</div><div class="t f" style="left:170px;top:994px">Mid</div><div class="t f" style="left:212px;top:994px">Cen</div><div class="t f" style="left:256px;top:994px">Int</div><div class="t f" style="left:293px;top:994px">Perp</div><div class="t f" style="left:340px;top:994px">Tan</div><div class="t f" style="left:383px;top:994px">Quad</div><div class="t f" style="left:435px;top:994px">Knot</div><div class="t f" style="left:482px;top:994px">Vertex</div><div class="t f" style="left:537px;top:994px">Project</div><div class="t f" style="left:595px;top:994px">Disable</div>

<!-- status text -->
<div class="t" style="left:8px;top:1023px">CPlane</div><div class="t" style="left:71px;top:1023px">x 366.6047</div><div class="t" style="left:160px;top:1023px">y -15.6028</div><div class="t" style="left:254px;top:1023px">z 0.0000</div><div class="t" style="left:335px;top:1023px">Millimeters</div><div class="t" style="left:428px;top:1023px">Default</div><div class="t" style="left:591px;top:1023px;font-weight:bold">Grid Snap</div><div class="t" style="left:667px;top:1023px">Ortho</div><div class="t" style="left:714px;top:1023px">Planar</div><div class="t" style="left:767px;top:1023px;font-weight:bold">Osnap</div><div class="t" style="left:824px;top:1023px">SmartTrack</div><div class="t" style="left:907px;top:1023px">Gumball</div><div class="t" style="left:978px;top:1023px">Record History</div><div class="t" style="left:1082px;top:1023px">Filter</div><div class="t" style="left:1121px;top:1023px">Absolute tolerance: 0.001</div>

<!-- panel tabs text -->
<div class="t k" style="left:1505px;top:202px">Properties</div><div class="t k" style="left:1586px;top:202px">Layers</div><div class="t k" style="left:1651px;top:202px">Display</div><div class="t k" style="left:1719px;top:202px">Help</div>

<!-- properties -->
<div class="s" style="top:232px">Viewport</div>
<div class="r" style="top:250px"><i>Title</i><u>Top</u></div>
<div class="r d" style="top:269px"><i>Width</i><u>1358</u></div>
<div class="r d" style="top:288px"><i>Height</i><u>771</u></div>
<div class="r" style="top:307px"><i>Projection</i><u>Parallel</u></div>
<div class="b" style="left:1894px;top:307px;width:17px;height:17px;background:#dfe2ea;border-left:1px solid #555;border-top:1px solid #555"></div>
<svg class="b" style="left:1898px;top:313px" width="10" height="6"><path d="M1 1H9L5 5Z" fill="#000"/></svg>
<div class="s" style="top:331px">Camera</div>
<div class="r d" style="top:349px"><i>Lens Length</i><u>50.0</u></div>
<div class="r" style="top:368px"><i>Rotation</i><u>90.0</u></div>
<div class="r" style="top:387px"><i>X Location</i><u>226.881</u></div>
<div class="r" style="top:406px"><i>Y Location</i><u>58.048</u></div>
<div class="r" style="top:425px"><i>Z Location</i><u>0.156</u></div>
<div class="r" style="top:444px"><i>Location</i></div>
<div class="p" style="top:445px">Place...</div>
<div class="s" style="top:468px">Target</div>
<div class="r" style="top:486px"><i>X Target</i><u>226.881</u></div>
<div class="r" style="top:505px"><i>Y Target</i><u>58.048</u></div>
<div class="r" style="top:524px"><i>Z Target</i><u>0.000</u></div>
<div class="r" style="top:543px"><i>Location</i></div>
<div class="p" style="top:544px">Place...</div>
<div class="s" style="top:567px">Wallpaper</div>
<div class="r" style="top:585px"><i>Filename</i><u style="left:214px">(none)</u></div>
<div class="b" style="left:1896px;top:587px;width:15px;height:15px;border:1px solid #666;border-radius:3px;background:#e6e7ea;text-align:center;line-height:15px;font-size:11px">...</div>
<div class="r" style="top:604px"><i>Show</i></div>
<div class="r" style="top:623px"><i>Gray</i></div>
<svg class="b" style="left:1705px;top:606px" width="13" height="32"><use href="#cb" x="0" y="0" width="13" height="13"/><use href="#cb" x="0" y="19" width="13" height="13"/></svg>
</body></html>
